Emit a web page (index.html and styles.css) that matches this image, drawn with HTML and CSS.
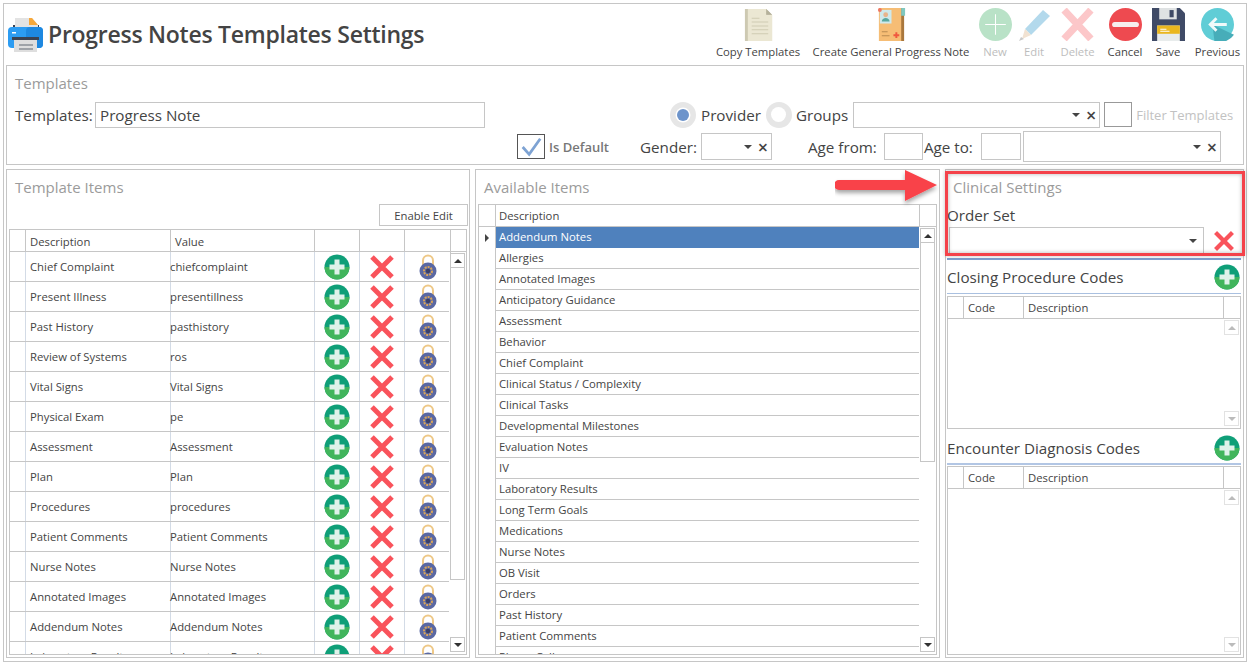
FILE: index.html
```html
<!DOCTYPE html>
<html lang="en">
<head>
<meta charset="utf-8">
<title>Progress Notes Templates Settings</title>
<link rel="stylesheet" href="styles.css">
</head>
<body>
<svg class="defs" width="0" height="0" aria-hidden="true">
  <symbol id="i-plus" viewBox="0 0 26 26">
    <circle cx="13" cy="13" r="12.5" fill="#0f9f78"/>
    <path d="M.5 13a12.5 12.5 0 0 0 25 0z" fill="#41b55c"/>
    <path d="M10.5 5.5h5v5h5v5h-5v5h-5v-5h-5v-5h5z" fill="#dff2ea"/>
  </symbol>
  <symbol id="i-x" viewBox="0 0 26 26">
    <path d="M3 3l20 20M23 3L3 23" stroke="#f9535b" stroke-width="5" fill="none"/>
  </symbol>
  <symbol id="i-lock" viewBox="0 0 18 26">
    <path d="M4 13V6.500a5 5 0 0 1 10 0V13" fill="none" stroke="#eec887" stroke-width="2"/>
    <circle cx="9" cy="17" r="8.500" fill="#5a68a3"/>
    <circle cx="9" cy="17" r="4" fill="none" stroke="#d9a55a" stroke-width="2" stroke-dasharray="2 1"/>
    <circle cx="9" cy="17" r="2.200" fill="#39406a"/>
  </symbol>
</svg>
<main class="window">
  <header class="header">
    <div class="brand">
      <svg class="brand-icon" viewBox="0 0 36 36">
        <path d="M5 8h26v8H5z" fill="#3b4252"/>
        <path d="M7 1h17l6 7v9H7z" fill="#e3e3e3"/>
        <path d="M21 1h3l6 7h-9z" fill="#f7a83a"/>
        <rect x="0" y="10" width="35" height="21" rx="4" fill="#2c9cf2"/>
        <rect x="18" y="10" width="17" height="21" rx="4" fill="#1e88e0"/>
        <rect x="4" y="20" width="27" height="3" fill="#3b4252"/>
        <path d="M6 23h23v12H6z" fill="#dedede"/>
        <path d="M11 27h14v2H11zM11 31h14v2H11z" fill="#9fa3a8"/>
        <rect x="4" y="15" width="4" height="1.500" fill="#fff"/>
      </svg>
      <h1 class="title">Progress Notes Templates Settings</h1>
    </div>
    <nav class="toolbar">
      <div class="tool tool-copy">
        <svg class="tool-icon" viewBox="0 0 28 34"><path d="M0 1h22l6 6v27H0z" fill="#cdc9b2"/><path d="M3 1h19v6h6v27H3z" fill="#ebe7d3"/><path d="M22 1l6 6h-6z" fill="#b5b19b"/><path d="M7 10h8v1H7zM7 14h17v1H7zM7 18h17v1H7zM7 22h17v1H7zM7 26h17v1H7z" fill="#cfcbb3"/></svg>
        <span>Copy Templates</span>
      </div>
      <div class="tool tool-create">
        <svg class="tool-icon" viewBox="0 0 28 34"><path d="M1 0h25v34H1z" fill="#f6bd75"/><path d="M24 0h3v34h-3z" fill="#a9773c"/><path d="M24 0h4v8h-4z" fill="#7fc8c0"/><rect x="2" y="2" width="12" height="14" fill="#cfe9ec"/><circle cx="8" cy="7" r="2.500" fill="#e8b48c"/><path d="M4 14c0-5 8-5 8 0z" fill="#58a8a0"/><circle cx="2" cy="2" r="2" fill="#ee7763"/><path d="M18 25h2v2h2v2h-2v2h-2v-2h-2v-2h2z" fill="#f0583f"/><path d="M4 24h6v1H4zM4 28h8v1H4z" fill="#b98a52"/></svg>
        <span>Create General Progress Note</span>
      </div>
      <div class="tool tool-new off">
        <svg class="tool-icon" viewBox="0 0 32 32"><circle cx="16" cy="16" r="16" fill="#b9e2c7"/><path d="M15.500 6h1v9.500h9.500v1h-9.500v9.500h-1v-9.500H6v-1h9.500z" fill="#fff"/></svg>
        <span>New</span>
      </div>
      <div class="tool tool-edit off">
        <svg class="tool-icon" viewBox="0 0 33 33"><path d="M7 21L25 2l7 6-19 19z" fill="#b3d9ec"/><path d="M7 21l6 6-9 4z" fill="#f1e2d2"/><path d="M1 33l2-4 3 2z" fill="#c9c9c9"/></svg>
        <span>Edit</span>
      </div>
      <div class="tool tool-delete off">
        <svg class="tool-icon" viewBox="0 0 32 32"><path d="M3 2l26 28M29 2L3 30" stroke="#fcc7c9" stroke-width="7" fill="none"/></svg>
        <span>Delete</span>
      </div>
      <div class="tool tool-cancel">
        <svg class="tool-icon" viewBox="0 0 32 32"><circle cx="16" cy="16" r="16" fill="#ee4a50"/><rect x="3" y="13.500" width="26" height="5" rx="2.500" fill="#f6eeee"/></svg>
        <span>Cancel</span>
      </div>
      <div class="tool tool-save">
        <svg class="tool-icon" viewBox="0 0 32 32"><path d="M0 0h27l5 5v27H0z" fill="#3f4a66"/><path d="M7 0h17v11H7z" fill="#dfe2e3"/><path d="M17 2h4v7h-4z" fill="#3f4a66"/><path d="M5 17h22v15H5z" fill="#e8ecec"/><path d="M5 17h22v8H5z" fill="#eab71f"/><path d="M8 20h6v1H8zM8 22h9v1H8z" fill="#fff"/></svg>
        <span>Save</span>
      </div>
      <div class="tool tool-prev">
        <svg class="tool-icon" viewBox="0 0 32 32"><circle cx="16" cy="16" r="16" fill="#60cdd6"/><path d="M11 16l21 10a16 16 0 0 1-19 6z" fill="#47adb9"/><path d="M7 16l7-7 2 2-3.500 3.500H25v3H12.500L16 21l-2 2z" fill="#f0fafa"/></svg>
        <span>Previous</span>
      </div>
    </nav>
  </header>

  <section class="panel templates">
    <h2 class="panel-title">Templates</h2>
    <div class="form-row form-row-1">
      <label class="lbl lbl-templates">Templates:</label>
      <div class="field field-name">Progress Note</div>
      <span class="radio radio-on"></span>
      <span class="lbl lbl-provider">Provider</span>
      <span class="radio radio-groups"></span>
      <span class="lbl lbl-groups">Groups</span>
      <div class="combo combo-groups"><i class="caret"></i><b class="clear">×</b></div>
      <span class="check-empty"></span>
      <span class="filter">Filter Templates</span>
    </div>
    <div class="form-row form-row-2">
      <span class="check">
        <svg viewBox="0 0 28 26" width="26" height="24"><path d="M5 13l7 8L24 4" fill="none" stroke="#7ea3d3" stroke-width="3"/></svg>
      </span>
      <span class="is-default">Is Default</span>
      <span class="lbl lbl-gender">Gender:</span>
      <div class="combo combo-gender"><i class="caret"></i><b class="clear">×</b></div>
      <span class="lbl lbl-agefrom">Age from:</span>
      <div class="field field-age"></div>
      <span class="lbl lbl-ageto">Age to:</span>
      <div class="field field-age field-age2"></div>
      <div class="combo combo-last"><i class="caret"></i><b class="clear">×</b></div>
    </div>
  </section>

  <div class="columns">
    <section class="panel items">
      <h2 class="panel-title">Template Items</h2>
      <div class="edit-row"><button class="btn">Enable Edit</button></div>
      <div class="grid grid-items">
        <div class="thead">
          <span></span><span>Description</span><span>Value</span><span></span><span></span><span></span><span></span>
        </div>
        <div class="tbody">
          <div class="rows">
            <div class="row"><span></span><span>Chief Complaint</span><span>chiefcomplaint</span><span><svg class="ic-plus"><use href="#i-plus"/></svg></span><span><svg class="ic-x"><use href="#i-x"/></svg></span><span><svg class="ic-lock"><use href="#i-lock"/></svg></span></div>
            <div class="row"><span></span><span>Present Illness</span><span>presentillness</span><span><svg class="ic-plus"><use href="#i-plus"/></svg></span><span><svg class="ic-x"><use href="#i-x"/></svg></span><span><svg class="ic-lock"><use href="#i-lock"/></svg></span></div>
            <div class="row"><span></span><span>Past History</span><span>pasthistory</span><span><svg class="ic-plus"><use href="#i-plus"/></svg></span><span><svg class="ic-x"><use href="#i-x"/></svg></span><span><svg class="ic-lock"><use href="#i-lock"/></svg></span></div>
            <div class="row"><span></span><span>Review of Systems</span><span>ros</span><span><svg class="ic-plus"><use href="#i-plus"/></svg></span><span><svg class="ic-x"><use href="#i-x"/></svg></span><span><svg class="ic-lock"><use href="#i-lock"/></svg></span></div>
            <div class="row"><span></span><span>Vital Signs</span><span>Vital Signs</span><span><svg class="ic-plus"><use href="#i-plus"/></svg></span><span><svg class="ic-x"><use href="#i-x"/></svg></span><span><svg class="ic-lock"><use href="#i-lock"/></svg></span></div>
            <div class="row"><span></span><span>Physical Exam</span><span>pe</span><span><svg class="ic-plus"><use href="#i-plus"/></svg></span><span><svg class="ic-x"><use href="#i-x"/></svg></span><span><svg class="ic-lock"><use href="#i-lock"/></svg></span></div>
            <div class="row"><span></span><span>Assessment</span><span>Assessment</span><span><svg class="ic-plus"><use href="#i-plus"/></svg></span><span><svg class="ic-x"><use href="#i-x"/></svg></span><span><svg class="ic-lock"><use href="#i-lock"/></svg></span></div>
            <div class="row"><span></span><span>Plan</span><span>Plan</span><span><svg class="ic-plus"><use href="#i-plus"/></svg></span><span><svg class="ic-x"><use href="#i-x"/></svg></span><span><svg class="ic-lock"><use href="#i-lock"/></svg></span></div>
            <div class="row"><span></span><span>Procedures</span><span>procedures</span><span><svg class="ic-plus"><use href="#i-plus"/></svg></span><span><svg class="ic-x"><use href="#i-x"/></svg></span><span><svg class="ic-lock"><use href="#i-lock"/></svg></span></div>
            <div class="row"><span></span><span>Patient Comments</span><span>Patient Comments</span><span><svg class="ic-plus"><use href="#i-plus"/></svg></span><span><svg class="ic-x"><use href="#i-x"/></svg></span><span><svg class="ic-lock"><use href="#i-lock"/></svg></span></div>
            <div class="row"><span></span><span>Nurse Notes</span><span>Nurse Notes</span><span><svg class="ic-plus"><use href="#i-plus"/></svg></span><span><svg class="ic-x"><use href="#i-x"/></svg></span><span><svg class="ic-lock"><use href="#i-lock"/></svg></span></div>
            <div class="row"><span></span><span>Annotated Images</span><span>Annotated Images</span><span><svg class="ic-plus"><use href="#i-plus"/></svg></span><span><svg class="ic-x"><use href="#i-x"/></svg></span><span><svg class="ic-lock"><use href="#i-lock"/></svg></span></div>
            <div class="row"><span></span><span>Addendum Notes</span><span>Addendum Notes</span><span><svg class="ic-plus"><use href="#i-plus"/></svg></span><span><svg class="ic-x"><use href="#i-x"/></svg></span><span><svg class="ic-lock"><use href="#i-lock"/></svg></span></div>
            <div class="row"><span></span><span>Laboratory Results</span><span>Laboratory Results</span><span><svg class="ic-plus"><use href="#i-plus"/></svg></span><span><svg class="ic-x"><use href="#i-x"/></svg></span><span><svg class="ic-lock"><use href="#i-lock"/></svg></span></div>
          </div>
          <div class="scroll scroll-items">
            <span class="sbtn"><i class="up"></i></span>
            <span class="thumb"></span>
            <span class="sbtn"><i class="down"></i></span>
          </div>
        </div>
      </div>
    </section>

    <section class="panel available">
      <h2 class="panel-title">Available Items</h2>
      <div class="grid grid-avail">
        <div class="thead"><span></span><span>Description</span><span></span></div>
        <div class="tbody">
          <div class="rows">
            <div class="row selected"><span class="pointer"></span><span>Addendum Notes</span></div>
            <div class="row"><span></span><span>Allergies</span></div>
            <div class="row"><span></span><span>Annotated Images</span></div>
            <div class="row"><span></span><span>Anticipatory Guidance</span></div>
            <div class="row"><span></span><span>Assessment</span></div>
            <div class="row"><span></span><span>Behavior</span></div>
            <div class="row"><span></span><span>Chief Complaint</span></div>
            <div class="row"><span></span><span>Clinical Status / Complexity</span></div>
            <div class="row"><span></span><span>Clinical Tasks</span></div>
            <div class="row"><span></span><span>Developmental Milestones</span></div>
            <div class="row"><span></span><span>Evaluation Notes</span></div>
            <div class="row"><span></span><span>IV</span></div>
            <div class="row"><span></span><span>Laboratory Results</span></div>
            <div class="row"><span></span><span>Long Term Goals</span></div>
            <div class="row"><span></span><span>Medications</span></div>
            <div class="row"><span></span><span>Nurse Notes</span></div>
            <div class="row"><span></span><span>OB Visit</span></div>
            <div class="row"><span></span><span>Orders</span></div>
            <div class="row"><span></span><span>Past History</span></div>
            <div class="row"><span></span><span>Patient Comments</span></div>
            <div class="row"><span></span><span>Phone Calls</span></div>
          </div>
          <div class="scroll scroll-avail">
            <span class="sbtn"><i class="up"></i></span>
            <span class="thumb"></span>
            <span class="sbtn"><i class="down"></i></span>
          </div>
        </div>
      </div>
    </section>

    <section class="panel clinical">
      <h2 class="panel-title">Clinical Settings</h2>
      <div class="lbl order-label">Order Set</div>
      <div class="order-row">
        <div class="combo combo-order"><i class="caret"></i></div>
        <svg class="ic-x"><use href="#i-x"/></svg>
      </div>
      <div class="sub-head sub-closing">
        <span class="lbl">Closing Procedure Codes</span>
        <svg class="ic-plus"><use href="#i-plus"/></svg>
      </div>
      <div class="grid grid-codes grid-closing">
        <div class="thead"><span></span><span>Code</span><span>Description</span><span></span></div>
        <div class="tbody">
          <div class="rows"></div>
          <div class="scroll scroll-codes">
            <span class="sbtn"><i class="up"></i></span>
            <span class="sbtn"><i class="down"></i></span>
          </div>
        </div>
      </div>
      <div class="sub-head sub-encounter">
        <span class="lbl">Encounter Diagnosis Codes</span>
        <svg class="ic-plus"><use href="#i-plus"/></svg>
      </div>
      <div class="grid grid-codes grid-encounter">
        <div class="thead"><span></span><span>Code</span><span>Description</span><span></span></div>
        <div class="tbody">
          <div class="rows"></div>
          <div class="scroll scroll-codes">
            <span class="sbtn"><i class="up"></i></span>
            <span class="sbtn"><i class="down"></i></span>
          </div>
        </div>
      </div>
    </section>
  </div>
</main>

<div class="highlight"></div>
<svg class="arrow" viewBox="0 0 108 40">
  <defs><filter id="sh" x="-10%" y="-30%" width="120%" height="170%"><feDropShadow dx="0" dy="3" stdDeviation="2" flood-color="#000" flood-opacity=".35"/></filter></defs>
  <path d="M4 11h66V1l32 15-32 16V21H4a5 5 0 0 1 0-10z" fill="#f9424a" filter="url(#sh)"/>
</svg>
</body>
</html>
```

FILE: styles.css
```css
* { box-sizing: border-box; }
html, body { margin: 0; height: 100%; overflow: hidden; background: #fff; }
body {
  font-family: "Open Sans", "Noto Sans", "Liberation Sans", sans-serif;
  font-size: 11.3px;
  color: #444;
  position: relative;
}
.defs { position: absolute; }
.window {
  margin: 3px 0 0 3px;
  width: 1244px;
  height: 659px;
  border: 1px solid #c6c6c6;
  padding: 0 2px 3px 2px;
  display: flex;
  flex-direction: column;
}
.header { height: 61px; display: flex; justify-content: space-between; flex: none; }
.brand { display: flex; align-items: center; padding: 0 0 0 2px; }
.brand-icon { width: 36px; height: 36px; margin-top: 1px; }
.title { font-size: 23px; font-weight: 600; margin: 0 0 0 4px; color: #444; letter-spacing: -.26px; position: relative; top: -1px; }
.toolbar { display: flex; padding: 4px 4px 0 0; }
.tool { display: flex; flex-direction: column; align-items: center; white-space: nowrap; height: 52px; justify-content: space-between; }
.tool span { line-height: 16px; }
.tool-icon { height: 33px; width: 33px; }
.off span { color: #bdbdbd; }
.tool-copy { width: 84px; }
.tool-create { width: 158px; margin-left: 12px; }
.tool-new { width: 38px; margin-left: 6px; }
.tool-edit { width: 38px; margin-left: 1px; }
.tool-delete { width: 39px; margin-left: 5px; }
.tool-cancel { width: 40px; margin-left: 8px; }
.tool-save { width: 36px; margin-left: 5px; }
.tool-prev { width: 45px; margin-left: 9px; }

.panel { border: 1px solid #c6c6c6; background: #fff; }
.panel-title { font-size: 15px; font-weight: 400; color: #9b9b9b; margin: -1px 0 1px; line-height: 20px; }
.templates { height: 100px; flex: none; padding: 8px 8px 0 8px; }
.lbl { font-size: 15.200px; color: #444; white-space: nowrap; }
.form-row { display: flex; align-items: center; }
.form-row-1 { height: 27px; margin-top: 8px; }
.form-row-2 { height: 31px; margin-top: 3px; }
.lbl-templates { width: 75px; flex: none; }
.field { border: 1px solid #c6c6c6; height: 26px; background: #fff; }
.field-name { width: 390px; margin-left: 5px; padding-left: 4px; font-size: 15.200px; line-height: 24px; color: #444; flex: none; }
.radio { width: 26px; height: 26px; border-radius: 50%; background: #e6e6e6; display: flex; align-items: center; justify-content: center; flex: none; }
.radio::after { content: ""; width: 15px; height: 15px; border-radius: 50%; background: #fff; }
.radio-on { margin-left: 185px; }
.radio-on::after { background: #6d94cb; box-shadow: 0 0 0 1.500px #fff; width: 12px; height: 12px; }
.lbl-provider { margin-left: 5px; }
.radio-groups { margin-left: 5px; }
.lbl-groups { margin-left: 4px; }
.combo { border: 1px solid #c6c6c6; height: 26px; position: relative; background: #fff; display: flex; align-items: center; justify-content: flex-end; gap: 6px; padding-right: 3px; flex: none; }
.caret { width: 0; height: 0; border: 4px solid transparent; border-top: 4px solid #444; border-bottom: 0; }
.clear { font-size: 18px; font-weight: 600; line-height: 1; color: #444; }
.combo-groups { width: 247px; margin-left: 5px; }
.check-empty { width: 28px; height: 25px; border: 1px solid #999; margin-left: 4px; flex: none; }
.filter { font-size: 13px; color: #c2c2c2; margin-left: 4px; white-space: nowrap; }
.check { width: 28px; height: 25px; border: 1px solid #555; margin-left: 502px; display: flex; align-items: center; justify-content: center; flex: none; }
.is-default { font-size: 13px; font-weight: 600; color: #777; margin-left: 4px; white-space: nowrap; width: 62px; flex: none; }
.lbl-gender { margin-left: 29px; width: 56px; flex: none; }
.combo-gender { width: 71px; height: 27px; margin-left: 5px; }
.lbl-agefrom { margin-left: 36px; width: 71px; flex: none; }
.field-age { width: 39px; height: 27px; margin-left: 5px; flex: none; }
.lbl-ageto { margin-left: 1px; width: 55px; flex: none; }
.field-age2 { width: 40px; margin-left: 2px; }
.combo-last { width: 198px; height: 31px; margin-left: 2px; }

.columns { flex: 1; display: flex; gap: 5px; margin-top: 4px; min-height: 0; }
.columns > .panel { min-height: 0; overflow: hidden; }
.items { width: 464px; padding: 8px 2px 2px 2px; display: flex; flex-direction: column; }
.available { width: 465px; padding: 8px 2px 2px 2px; display: flex; flex-direction: column; }
.clinical { width: 299px; padding: 8px 2px 2px 1px; display: flex; flex-direction: column; }
.items .panel-title, .available .panel-title { padding-left: 6px; }
.clinical .panel-title { padding-left: 6px; }
.edit-row { display: flex; justify-content: flex-end; margin: 6px -1px 0 0; height: 24px; }
.btn { width: 89px; height: 22px; border: 1px solid #c6c6c6; background: #fff; font: inherit; color: #444; padding: 0; }
.grid { border: 1px solid #c6c6c6; display: flex; flex-direction: column; overflow: hidden; flex: 1; min-height: 0; }
.grid-items { margin-top: 1px; }
.grid-avail { margin-top: 6px; }
.thead { display: grid; height: 22px; border-bottom: 1px solid #c6c6c6; flex: none; align-items: stretch; }
.thead span { border-right: 1px solid #c6c6c6; padding-left: 4px; line-height: 21px; white-space: nowrap; }
.thead span:last-child { border-right: 0; }
.tbody { flex: 1; display: flex; min-height: 0; }
.rows { flex: 1; min-width: 0; overflow: hidden; }
.row { display: grid; border-bottom: 1px solid #c6c6c6; }
.row > span { display: flex; align-items: center; white-space: nowrap; }

.grid-items .thead { grid-template-columns: 16px 145px 144px 45px 45px 46px 1fr; }
.grid-items .thead span { line-height: 23px; }
.grid-items .row { grid-template-columns: 16px 145px 144px 45px 45px 46px; height: 30px; }
.grid-items .row > span { border-right: 1px solid #d3dbe6; }
.grid-items .row > span:nth-child(2) { padding-left: 4px; }
.grid-items .row > span:nth-child(3) { margin-left: -1px; }
.grid-items .row > span:nth-child(n+4) { justify-content: center; }
.ic-plus { width: 26px; height: 26px; flex: none; }
.ic-x { width: 26px; height: 26px; flex: none; }
.ic-lock { width: 18px; height: 26px; flex: none; }

.grid-avail .thead { grid-template-columns: 17px 424px 1fr; }
.grid-avail .thead span:nth-child(2) { padding-left: 3px; }
.grid-avail .row { grid-template-columns: 17px 1fr; height: 21px; border-bottom: 0; }
.grid-avail .row > span:first-child { border-right: 1px solid #c6c6c6; }
.grid-avail .row > span { height: 21px; }
.grid-avail .row > span:nth-child(2) { border-bottom: 1px solid #c6c6c6; padding: 0 0 2px 3px; }
.selected > span:nth-child(2) { background: #4f81bd; color: #fff; border-bottom-color: #4f81bd !important; }
.pointer::after { content: ""; margin-left: 6px; border: 4px solid transparent; border-left: 4px solid #444; border-right: 0; }

.scroll { flex: none; display: flex; flex-direction: column; justify-content: space-between; padding: 1px 1px 2px; }
.scroll-items { width: 17px; }
.scroll-avail { width: 17px; }
.scroll-codes { width: 17px; }
.sbtn { display: flex; align-items: center; justify-content: center; height: 15px; width: 15px; border: 1px solid #c6c6c6; background: #fff; flex: none; }
.thumb { border: 1px solid #c6c6c6; border-top: 0; flex: none; width: 15px; }
.scroll-items .thumb { height: 312px; margin-bottom: auto; }
.scroll-avail .thumb { height: 219px; margin-bottom: auto; }
.up { border: 4px solid transparent; border-bottom: 4px solid #333; border-top: 0; }
.down { border: 4px solid transparent; border-top: 4px solid #333; border-bottom: 0; }
.scroll-codes .sbtn { border-color: #e2e2e2; }
.scroll-codes .up { border-bottom-color: #bbb; }
.scroll-codes .down { border-top-color: #bbb; }

.order-label { margin: 7px 0 0 0; line-height: 20px; }
.order-row { display: flex; align-items: center; margin-top: 1px; height: 29px; }
.combo-order { width: 255px; height: 28px; margin-left: 2px; padding-right: 6px; }
.order-row .ic-x { width: 22px; height: 22px; margin-left: 9px; margin-top: 0; }
.sub-head { display: flex; justify-content: space-between; align-items: center; padding: 0 1px 0 0; flex: none; }
.sub-closing { height: 36px; margin-top: 3px; border-top: 2px solid #7f9fcf; border-bottom: 1px solid #a9c0e0; padding-top: 1px; }
.sub-encounter { height: 34px; margin-top: 2px; padding-top: 2px; border-bottom: 2px solid #b2c6e4; }
.grid-closing { flex: none; height: 133px; margin-top: 2px; }
.grid-encounter { margin-top: 1px; }
.grid-codes .thead { grid-template-columns: 16px 60px 200px 1fr; }
.highlight { position: absolute; left: 945px; top: 171px; width: 300px; height: 85px; border: 3px solid #f4424a; box-shadow: inset 0 0 4px rgba(0,0,0,.3), 0 0 4px rgba(0,0,0,.25); }
.arrow { position: absolute; left: 835px; top: 169px; width: 108px; height: 40px; }
```
